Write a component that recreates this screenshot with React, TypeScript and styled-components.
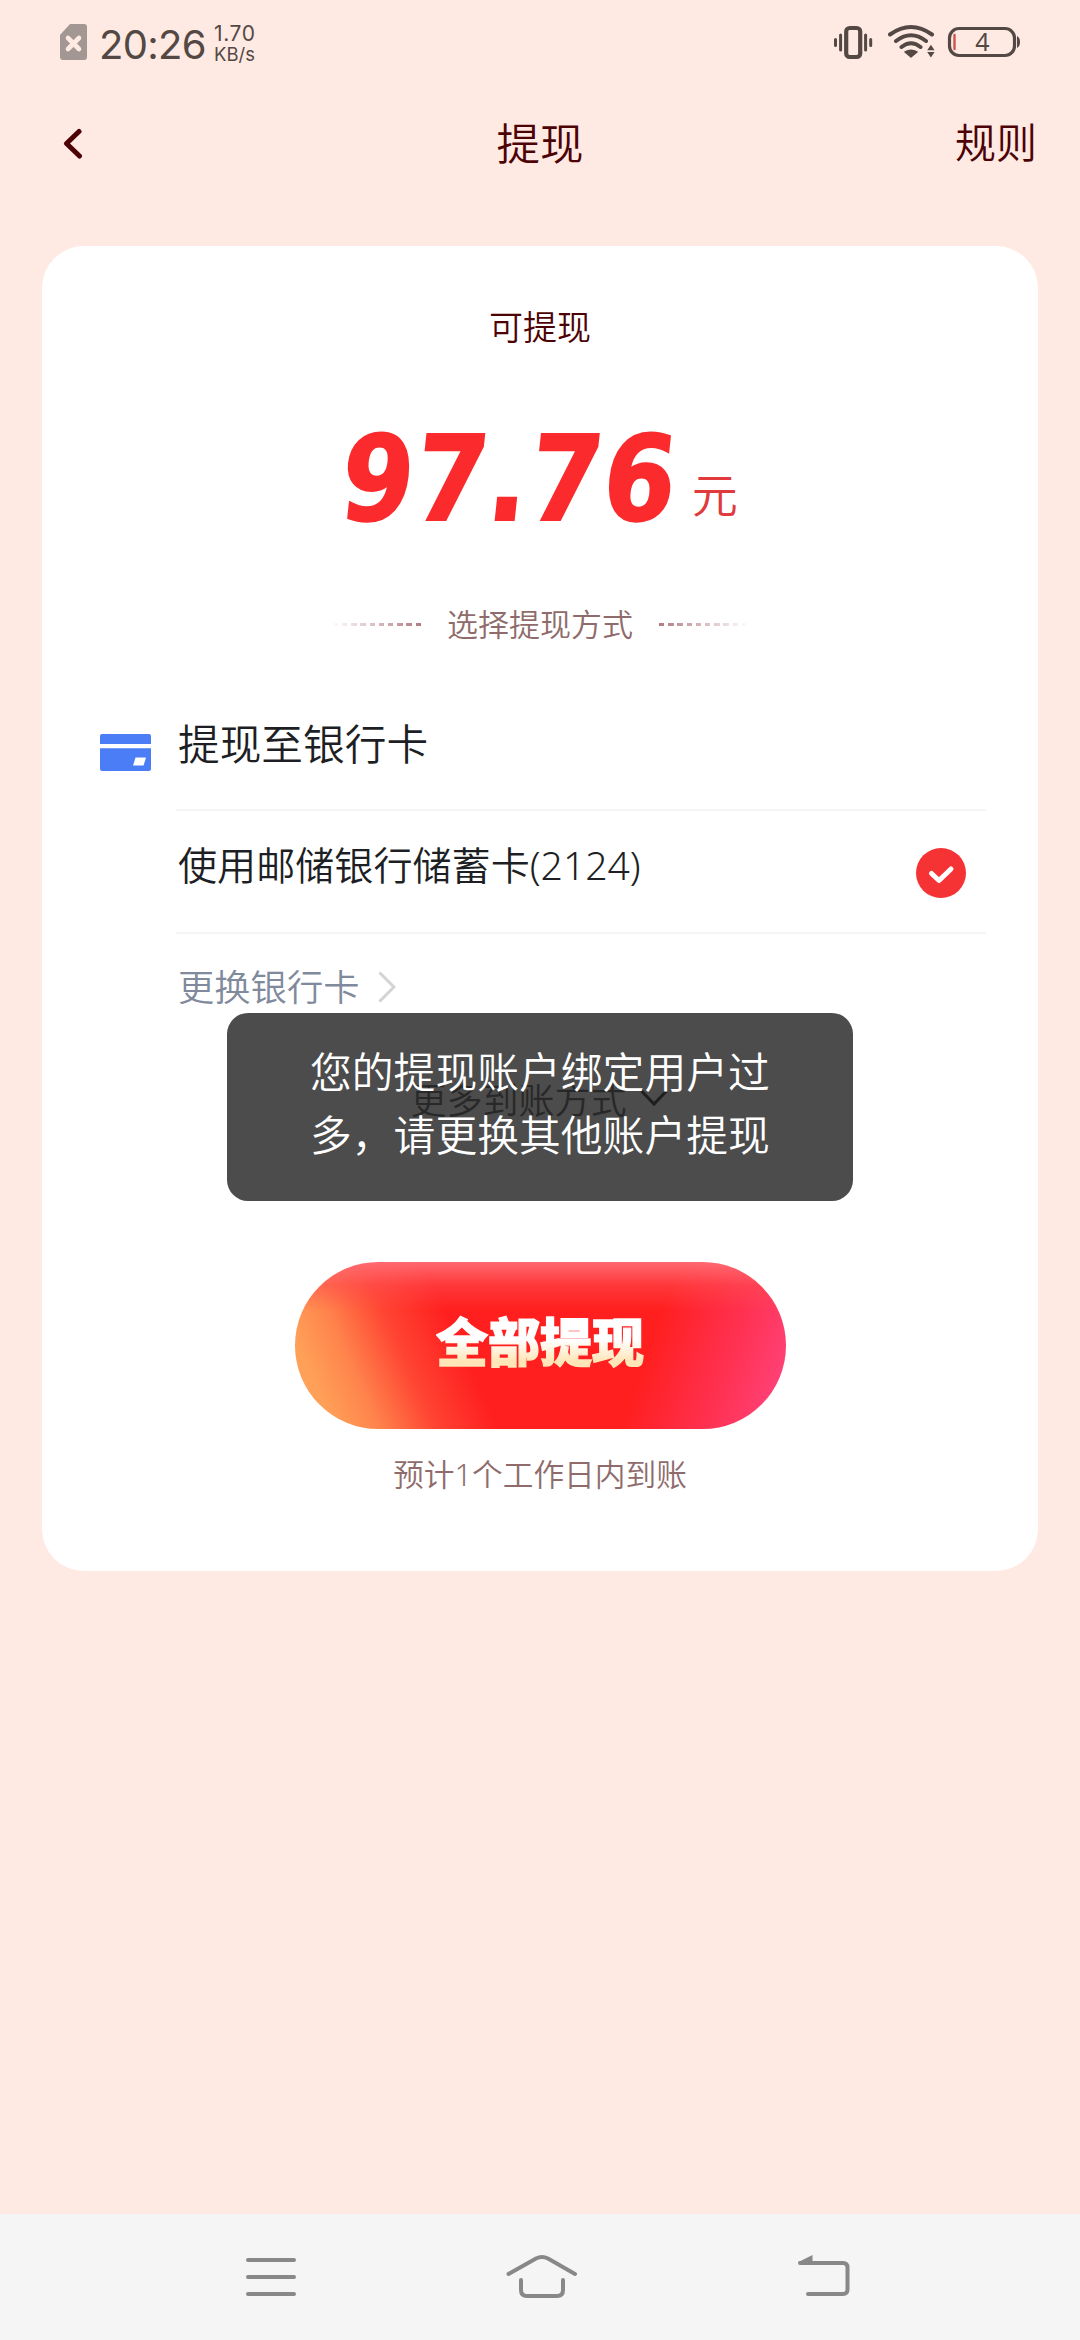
import React from 'react';
import styled, { createGlobalStyle } from 'styled-components';

const GlobalStyle = createGlobalStyle`
  * { box-sizing: border-box; }
  body {
    margin: 0;
    background: #ffeae3;
    font-family: "Noto Sans", "Noto Sans CJK SC", sans-serif;
    font-weight: 350;
  }
`;

const Screen = styled.main`
  width: 1080px;
  height: 2340px;
  display: flex;
  flex-direction: column;
  background: #ffeae3;
  overflow: hidden;
`;

const StatusBar = styled.header`
  height: 84px;
  padding: 0 59px 0 60px;
  display: flex;
  align-items: center;
  justify-content: space-between;
  color: #544844;
`;

const StatusGroup = styled.div`
  display: flex;
  align-items: center;
`;

const Clock = styled.span`
  margin-left: 12px;
  width: 112px;
  font: 400 40px/48px Inter, sans-serif;
  letter-spacing: -0.7px;
  padding-top: 5px;
`;

const Speed = styled.div`
  margin-left: 3px;
  padding-top: 4px;
  display: flex;
  flex-direction: column;
  font: 400 18.5px/20px Inter, sans-serif;
`;

const SpeedValue = styled.span`
  font-size: 21px;
  letter-spacing: 0.6px;
`;

const TitleBar = styled.nav`
  height: 162px;
  padding: 0 43px 42px 60px;
  display: grid;
  grid-template-columns: 1fr auto 1fr;
  align-items: center;
  color: #4d0205;
`;

const Title = styled.h1`
  margin: 0 17px 2px 0;
  font-size: 43.5px;
  line-height: 60px;
  font-weight: 350;
`;

const Rules = styled.span`
  justify-self: end;
  margin-bottom: 4px;
  font-size: 41px;
  line-height: 60px;
`;

const Card = styled.section`
  width: 996px;
  height: 1325px;
  margin: 0 auto;
  padding-top: 56px;
  border-radius: 42px;
  background: #fff;
  display: flex;
  flex-direction: column;
  align-items: center;
`;

const Label = styled.div`
  font-size: 34px;
  line-height: 50px;
  color: #4d0205;
`;

const Amount = styled.div`
  height: 176px;
  margin-top: 39px;
  display: flex;
  align-items: baseline;
  color: #fb2b2d;
`;

const Figure = styled.span`
  margin: 0 -23px;
  font: normal 700 118px/176px "DejaVu Sans", sans-serif;
  letter-spacing: 1.6px;
  -webkit-text-stroke: 2px #fb2b2d;
  transform: skewX(-6deg) scaleX(0.88);
`;

const Unit = styled.span`
  margin-left: 14px;
  font-size: 46px;
  color: #e03a3c;
  transform: translateY(-8px);
`;

const MethodHeading = styled.div`
  height: 50px;
  margin-top: 32px;
  display: flex;
  align-items: center;
  gap: 26px;
  font-size: 31px;
  color: #8f6c6b;
`;

const HeadingText = styled.span`
  padding-bottom: 4px;
`;

const Dashes = styled.i<{ $side: 'left' | 'right' }>`
  width: 91px;
  height: 3px;
  background: repeating-linear-gradient(
    to ${(p) => p.$side},
    #b27b83 0 5.4px,
    transparent 5.4px 9.2px
  );
  mask-image: linear-gradient(to ${(p) => p.$side}, #000, transparent);
`;

const Methods = styled.div`
  width: 100%;
  margin-top: 39px;
  padding: 0 52px 0 58px;
  display: grid;
  grid-template-columns: 76px 1fr;
`;

const CardIconCell = styled.div`
  padding-top: 46px;
  height: 123px;
`;

const MethodRow = styled.div<{ $size: number; $color?: string; $line?: boolean }>`
  grid-column: 2;
  height: 123px;
  padding: 0 20px 0 2px;
  display: flex;
  align-items: center;
  justify-content: space-between;
  font-size: ${(p) => p.$size}px;
  color: ${(p) => p.$color ?? '#1d1f24'};
  border-bottom: ${(p) => (p.$line ? '2px solid #f5f5f5' : '0')};
`;

const RowText = styled.span<{ $lift: number }>`
  display: flex;
  align-items: center;
  gap: 19px;
  padding-bottom: ${(p) => p.$lift}px;
`;

const CheckSlot = styled.span`
  display: flex;
  padding-top: 2px;
`;

const ChevronSlot = styled.span`
  display: flex;
  padding-top: 3px;
`;

const More = styled.div`
  height: 50px;
  margin-top: 16px;
  display: flex;
  align-items: center;
  gap: 13px;
  margin-right: 2px;
  font-size: 36px;
  color: #888;
`;

const WithdrawButton = styled.button`
  width: 491px;
  height: 167px;
  margin-top: 139px;
  padding: 0 0 11px;
  border: 0;
  border-radius: 84px;
  display: flex;
  align-items: center;
  justify-content: center;
  background:
    linear-gradient(180deg, rgba(255, 112, 120, 0.9) 0%, rgba(255, 80, 84, 0.5) 14%, rgba(255, 31, 31, 0) 29%),
    linear-gradient(66deg, #ffa058 7%, #ff834c 15%, rgba(255, 84, 58, 0.7) 25%, rgba(255, 31, 31, 0) 36%),
    linear-gradient(108deg, rgba(255, 31, 31, 0) 70%, #ff3356 87%, #ff4580 99%),
    #ff1f1f;
`;

const ButtonText = styled.span`
  font: 900 52px/70px "Noto Sans CJK SC", sans-serif;
  background: linear-gradient(180deg, #fff 50%, #ffe6b8 80%);
  background-clip: text;
  -webkit-background-clip: text;
  color: transparent;
  -webkit-text-stroke: 1.4px transparent;
`;

const Note = styled.div`
  margin-top: 20px;
  font-size: 30.7px;
  line-height: 50px;
  color: #8f6c6b;
`;

const Toast = styled.div`
  position: absolute;
  left: 227px;
  top: 1013px;
  width: 626px;
  height: 188px;
  padding: 26px 80px 0 83px;
  border-radius: 21px;
  background: rgba(0, 0, 0, 0.7);
  color: #fff;
  font-family: "Noto Sans CJK SC", sans-serif;
  font-size: 41.8px;
  line-height: 63px;
`;

const NavBar = styled.footer`
  height: 126px;
  margin-top: auto;
  padding: 0 228px 0 244px;
  display: flex;
  align-items: center;
  justify-content: space-between;
  background: #f5f5f5;
`;

const HomeSlot = styled.span`
  display: flex;
  margin-right: 13px;
`;

const SimIcon = () => (
  <svg width="27" height="36" viewBox="0 0 27 36">
    <path d="M10 0H24a3 3 0 0 1 3 3V33a3 3 0 0 1-3 3H3a3 3 0 0 1-3-3V11Z" fill="#a39793" />
    <path d="M8 14l11 11M19 14L8 25" stroke="#ffeae3" strokeWidth="4.6" strokeLinecap="round" />
  </svg>
);

const StatusIcons = () => (
  <svg width="188" height="40" viewBox="833 22 188 40" fill="none" stroke="#544844" strokeLinecap="round">
    <rect x="846.2" y="28" width="14" height="29" rx="3.5" strokeWidth="4.2" />
    <path d="M840.6 35v15M835.5 39.500v6M865.6 35v15M870.7 39.500v6" strokeWidth="3" />
    <path d="M890 34.500Q911 19.500 932 34.500M896 41Q911 29.500 926 41M901.500 47Q911 39.500 920.500 47" strokeWidth="4" />
    <path d="M905 52Q911 48.500 917 52L911 57Z" fill="#544844" strokeWidth="1.500" strokeLinejoin="round" />
    <path d="M927.200 50.200h7.400l-3.700-5.500zM927.200 52h7.400l-3.700 5.500z" fill="#544844" stroke="none" />
    <rect x="949.500" y="28.500" width="65" height="27" rx="9.500" strokeWidth="3.200" />
    <path d="M1017 36q3 1.500 3 6t-3 6z" fill="#544844" stroke="none" />
    <path d="M954.500 35v14" stroke="#d0524c" strokeWidth="2.400" />
    <text x="982.500" y="51" textAnchor="middle" fontFamily="Noto Sans" fontSize="25" fontWeight="400" fill="#544844" stroke="none">4</text>
  </svg>
);

const BackChevron = () => (
  <svg width="24" height="32" viewBox="60 128 24 32" fill="none">
    <path d="M79 131.500L66.500 143.500L79.500 156" stroke="#4d0205" strokeWidth="5" strokeLinecap="round" strokeLinejoin="round" />
  </svg>
);

const BankCardIcon = () => (
  <svg width="51" height="37" viewBox="0 0 51 37">
    <path d="M2 0H49a2 2 0 0 1 2 2V10H0V2a2 2 0 0 1 2-2ZM0 14.300H51V35a2 2 0 0 1-2 2H2a2 2 0 0 1-2-2Z" fill="#4a7df6" />
    <path d="M35.500 23.500H46L43.500 31.500H33Z" fill="#fff" />
  </svg>
);

const CheckIcon = () => (
  <svg width="50" height="50" viewBox="0 0 50 50" fill="none">
    <circle cx="25" cy="25" r="25" fill="#f53234" />
    <path d="M15.500 25.500L23 32.500L35 21" stroke="#fff" strokeWidth="5" strokeLinecap="round" strokeLinejoin="round" />
  </svg>
);

const ChevronRight = () => (
  <svg width="18" height="32" viewBox="0 0 18 32" fill="none">
    <path d="M1.500 1.500L16 16L1.500 30.500" stroke="#d3d3d5" strokeWidth="3" />
  </svg>
);

const ChevronDown = () => (
  <svg width="28" height="18" viewBox="0 0 28 18" fill="none">
    <path d="M1.500 2L14 15L26.500 2" stroke="#666" strokeWidth="3" />
  </svg>
);

const MenuIcon = () => (
  <svg width="54" height="46" viewBox="244 2254 54 46" fill="none">
    <path d="M248 2260H294M248 2277H294M248 2294H294" stroke="#888" strokeWidth="4" strokeLinecap="round" />
  </svg>
);

const HomeIcon = () => (
  <svg width="72" height="46" viewBox="505 2254 72 46" fill="none" stroke="#888" strokeWidth="4" strokeLinecap="round">
    <path d="M507.500 2274L535 2258.500Q541 2255.500 547 2258.500L574 2274M520 2280V2290Q520 2296 526 2296H556Q562 2296 562 2290V2280" />
  </svg>
);

const ReturnIcon = () => (
  <svg width="54" height="46" viewBox="798 2254 54 46" fill="none">
    <path d="M800 2263H843Q847.500 2263 847.500 2267.500V2289.500Q847.500 2294 843 2294H808" stroke="#888" strokeWidth="4" strokeLinecap="round" />
    <path d="M798.500 2262L812.500 2255V2265H800Z" fill="#888" />
  </svg>
);

export default function App() {
  return (
    <>
      <GlobalStyle />
      <Screen lang="zh-CN">
        <StatusBar>
          <StatusGroup>
            <SimIcon />
            <Clock>20:26</Clock>
            <Speed>
              <SpeedValue>1.70</SpeedValue>
              <span>KB/s</span>
            </Speed>
          </StatusGroup>
          <StatusIcons />
        </StatusBar>
        <TitleBar>
          <BackChevron />
          <Title>提现</Title>
          <Rules>规则</Rules>
        </TitleBar>
        <Card>
          <Label>可提现</Label>
          <Amount>
            <Figure>97.76</Figure>
            <Unit>元</Unit>
          </Amount>
          <MethodHeading>
            <Dashes $side="left" />
            <HeadingText>选择提现方式</HeadingText>
            <Dashes $side="right" />
          </MethodHeading>
          <Methods>
            <CardIconCell>
              <BankCardIcon />
            </CardIconCell>
            <MethodRow $size={41.7} $line>
              <RowText $lift={13}>提现至银行卡</RowText>
            </MethodRow>
            <MethodRow $size={39.1} $line>
              <RowText $lift={17}>使用邮储银行储蓄卡(2124)</RowText>
              <CheckSlot>
                <CheckIcon />
              </CheckSlot>
            </MethodRow>
            <MethodRow $size={36.3} $color="#808a9c">
              <RowText $lift={21}>
                更换银行卡
                <ChevronSlot>
                  <ChevronRight />
                </ChevronSlot>
              </RowText>
            </MethodRow>
          </Methods>
          <More>
            更多到账方式
            <ChevronDown />
          </More>
          <WithdrawButton>
            <ButtonText>全部提现</ButtonText>
          </WithdrawButton>
          <Note>预计1个工作日内到账</Note>
        </Card>
        <NavBar>
          <MenuIcon />
          <HomeSlot>
            <HomeIcon />
          </HomeSlot>
          <ReturnIcon />
        </NavBar>
      </Screen>
      <Toast lang="zh-CN">您的提现账户绑定用户过多，请更换其他账户提现</Toast>
    </>
  );
}
